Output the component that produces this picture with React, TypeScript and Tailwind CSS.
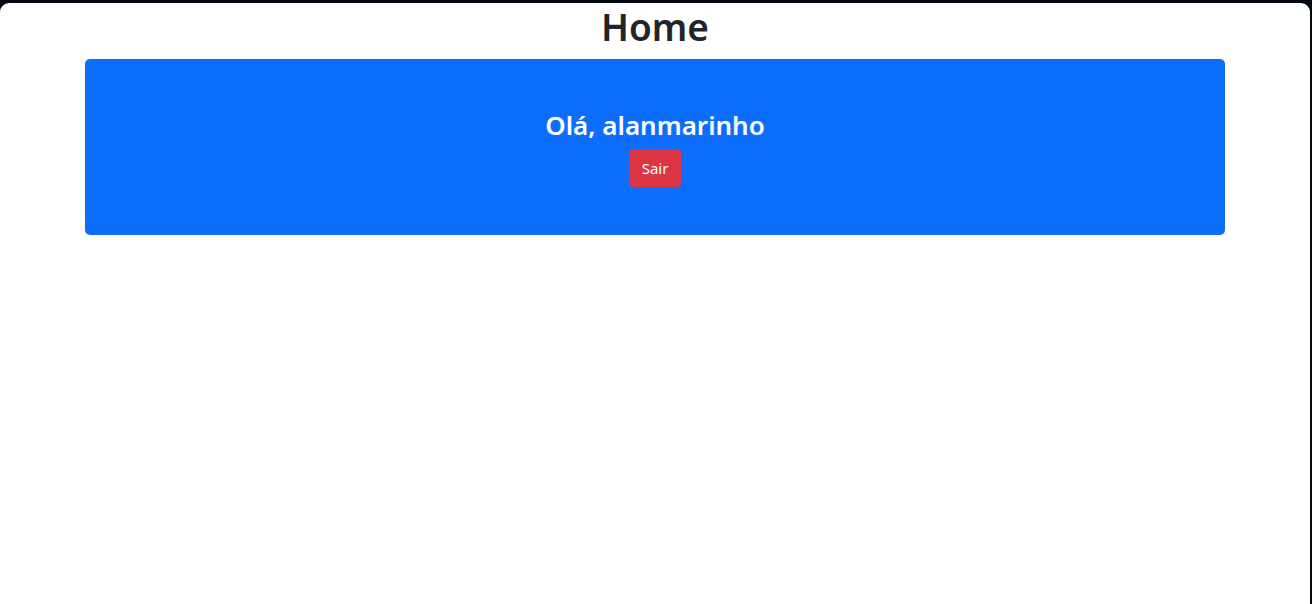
const App = () => {
  return (
    <div className="bg-[#030712] pt-[3px] pr-[2px] h-[604px] font-['Noto_Sans',sans-serif]">
      <div className="bg-white rounded-t-[9px] h-[601px]">
        <h1 className="text-center text-[37px] leading-[48px] font-semibold text-[#212529] mb-2">
          Home
        </h1>
        <div className="mx-auto w-[1140px] h-[176px] bg-[#0d6efd] rounded-[5px] flex flex-col items-center pt-[51px]">
          <h4 className="text-white text-[26px] leading-[30px] font-semibold mb-[9px]">
            Olá, alanmarinho
          </h4>
          <button className="bg-[#dc3545] text-white text-[15px] leading-6 px-3 py-[6px] border border-[#dc3545] rounded-[4px]">
            Sair
          </button>
        </div>
      </div>
    </div>
  );
};

export default App;
